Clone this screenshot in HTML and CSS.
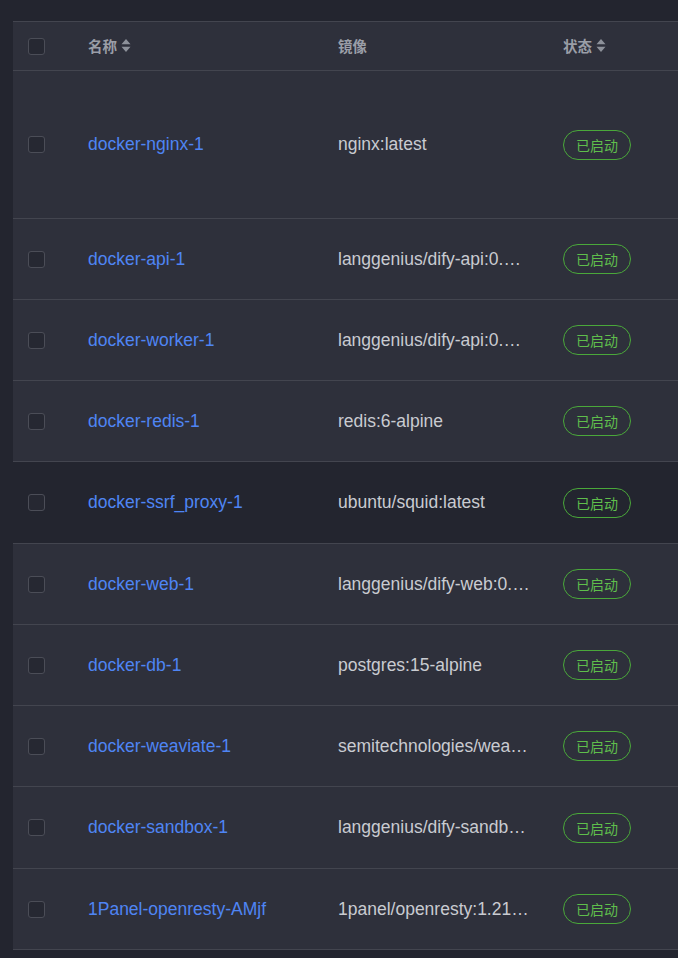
FILE: index.html
```html
<!DOCTYPE html>
<html lang="zh-CN">
<head>
<meta charset="utf-8">
<link rel="stylesheet" href="styles.css">
</head>
<body>
<div class="wrap">
<table class="grid">
<colgroup>
<col class="c-check"><col class="c-name"><col class="c-image"><col class="c-status">
</colgroup>
<thead>
<tr>
<th><span class="cb"></span></th>
<th><span class="th-label">名称<svg class="sort" viewBox="0 0 10 15" width="10" height="15"><path d="M5 1 L9.5 6.3 H0.5Z M5 14 L9.5 8.7 H0.5Z" fill="#8d919a"/></svg></span></th>
<th><span class="th-label">镜像</span></th>
<th><span class="th-label">状态<svg class="sort" viewBox="0 0 10 15" width="10" height="15"><path d="M5 1 L9.5 6.3 H0.5Z M5 14 L9.5 8.7 H0.5Z" fill="#8d919a"/></svg></span></th>
</tr>
</thead>
<tbody>
<tr class="tall"><td><span class="cb"></span></td><td><a class="name">docker-nginx-1</a></td><td><span class="img">nginx:latest</span></td><td><span class="badge">已启动</span></td></tr>
<tr><td><span class="cb"></span></td><td><a class="name">docker-api-1</a></td><td><span class="img">langgenius/dify-api:0.15.3</span></td><td><span class="badge">已启动</span></td></tr>
<tr><td><span class="cb"></span></td><td><a class="name">docker-worker-1</a></td><td><span class="img">langgenius/dify-api:0.15.3</span></td><td><span class="badge">已启动</span></td></tr>
<tr><td><span class="cb"></span></td><td><a class="name">docker-redis-1</a></td><td><span class="img">redis:6-alpine</span></td><td><span class="badge">已启动</span></td></tr>
<tr class="hover wide"><td><span class="cb"></span></td><td><a class="name">docker-ssrf_proxy-1</a></td><td><span class="img">ubuntu/squid:latest</span></td><td><span class="badge">已启动</span></td></tr>
<tr><td><span class="cb"></span></td><td><a class="name">docker-web-1</a></td><td><span class="img">langgenius/dify-web:0.15.3</span></td><td><span class="badge">已启动</span></td></tr>
<tr><td><span class="cb"></span></td><td><a class="name">docker-db-1</a></td><td><span class="img">postgres:15-alpine</span></td><td><span class="badge">已启动</span></td></tr>
<tr><td><span class="cb"></span></td><td><a class="name">docker-weaviate-1</a></td><td><span class="img">semitechnologies/weaviate:1.19.0</span></td><td><span class="badge">已启动</span></td></tr>
<tr class="wide"><td><span class="cb"></span></td><td><a class="name">docker-sandbox-1</a></td><td><span class="img">langgenius/dify-sandbox:0.2.10</span></td><td><span class="badge">已启动</span></td></tr>
<tr><td><span class="cb"></span></td><td><a class="name">1Panel-openresty-AMjf</a></td><td><span class="img">1panel/openresty:1.21.4.3-3-1</span></td><td><span class="badge">已启动</span></td></tr>
</tbody>
</table>
</div>
</body>
</html>
```
FILE: styles.css
```css
html, body {
  margin: 0;
  padding: 0;
  background: #23252f;
  height: 100%;
  overflow: hidden;
}
.wrap {
  padding: 21px 0 0 13px;
}
.grid {
  border-collapse: collapse;
  table-layout: fixed;
  width: 665px;
  background: #2e303b;
  font-family: "Liberation Sans", Arial, "Noto Sans CJK SC", sans-serif;
  font-size: 17.5px;
}
.c-check { width: 63px; }
.c-name { width: 250px; }
.c-image { width: 225px; }
.c-status { width: 127px; }
.grid tr {
  border-top: 1px solid #43454f;
  border-bottom: 1px solid #43454f;
}
.grid th, .grid td {
  padding: 0 12px;
  text-align: left;
  vertical-align: middle;
  white-space: nowrap;
  overflow: hidden;
}
.grid th:first-child, .grid td:first-child {
  padding: 0 0 0 15px;
}
.grid thead tr { height: 49px; }
.grid tbody tr { height: 81px; }
.grid tbody tr.wide { height: 82px; }
.grid tbody tr.tall { height: 148px; }
.grid tbody tr.hover { background: #23252f; }
.th-label {
  display: inline-flex;
  align-items: center;
  gap: 4px;
  color: #9a9ea7;
  font-weight: bold;
  font-size: 14.5px;
  font-family: "Noto Sans CJK SC", sans-serif;
}
.sort { display: block; }
.cb {
  display: block;
  width: 15px;
  height: 15px;
  border: 1px solid #4b4d57;
  border-radius: 3px;
  background: #262832;
}
.name {
  color: #4f85f4;
  text-decoration: none;
}
.img {
  display: block;
  color: #c9cbd1;
  overflow: hidden;
  text-overflow: ellipsis;
  max-width: 192px;
}
.badge {
  display: inline-block;
  box-sizing: border-box;
  height: 30px;
  line-height: 28px;
  padding: 0 12px;
  border: 1px solid #4aa83a;
  border-radius: 15px;
  color: #5fbe4c;
  font-size: 14px;
  font-family: "Noto Sans CJK SC", sans-serif;
}
```
